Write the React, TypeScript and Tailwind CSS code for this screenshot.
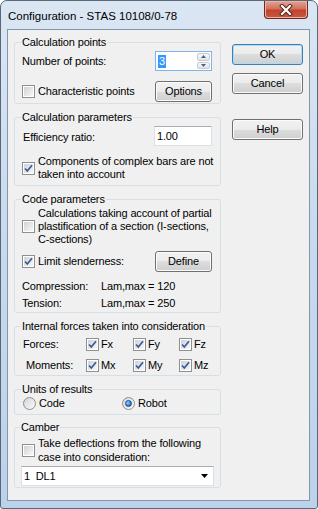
import type { ReactNode } from "react";

function Check({ checked = false }: { checked?: boolean }) {
  return (
    <span className="flex h-[13px] w-[13px] shrink-0 items-center justify-center border border-[#8e8f8f] bg-white p-[1px]">
      <span className="relative flex h-full w-full items-center justify-center bg-gradient-to-br from-[#cfd2d6] to-[#f7f7f7]">
        {checked && (
          <svg width="9" height="9" viewBox="0 0 9 9" className="absolute">
            <path d="M1 4.5 L3.3 7 L8 1.2" fill="none" stroke="#3b5a9a" strokeWidth="1.7" />
          </svg>
        )}
      </span>
    </span>
  );
}

function Radio({ checked = false }: { checked?: boolean }) {
  return (
    <span className="flex h-[13px] w-[13px] shrink-0 items-center justify-center rounded-full border border-[#8e8f8f] bg-gradient-to-br from-[#d4d6da] to-[#fafafa]">
      {checked && (
        <span className="h-[7px] w-[7px] rounded-full border border-[#1c4a82] bg-[radial-gradient(circle_at_35%_35%,#9fd6ff,#2a7ed2_60%,#155aa3)]" />
      )}
    </span>
  );
}

function Btn({ children, wide, def }: { children: ReactNode; wide?: boolean; def?: boolean }) {
  return (
    <button
      className={
        "flex h-[21px] items-center justify-center rounded-[3px] border text-[11px] leading-[13px] text-black bg-[linear-gradient(#f2f2f2,#ebebeb_50%,#dddddd_50%,#cfcfcf)] " +
        (wide ? "w-[71px] " : "w-[57px] ") +
        (def ? "border-[#3c7fb1] shadow-[inset_0_0_0_1px_#aedcf7]" : "border-[#707070] shadow-[inset_0_0_0_1px_#fbfbfb]")
      }
    >
      {children}
    </button>
  );
}

function Group({ title, className, children }: { title: string; className: string; children: ReactNode }) {
  return (
    <fieldset className={"min-w-0 rounded-[3px] border border-[#d5dfe5] pl-[7px] pr-[8px] " + className}>
      <legend className="-ml-[1px] whitespace-nowrap px-[1px] leading-[13px]">{title}</legend>
      {children}
    </fieldset>
  );
}

export default function App() {
  return (
    <div className="flex h-[509px] w-[318px] flex-col rounded-t-[7px] rounded-b-[3px] border border-[#58677a] bg-gradient-to-b from-[#dbe6f3] via-[#c7d9ee] to-[#bcd2ea] font-['Liberation_Sans',Arial,sans-serif] text-[11px] leading-[13px] tracking-[-0.15px] text-black">
      {/* title bar */}
      <div className="flex h-[28px] shrink-0 items-start justify-between">
        <span className="ml-[7px] mt-[8px] text-[11.5px] leading-[14px] tracking-normal">Configuration - STAS 10108/0-78</span>
        <div className="mr-[9px] flex h-[18px] w-[44px] items-center justify-center rounded-b-[4px] border border-t-0 border-[#6e2a22] bg-[linear-gradient(#e8a493,#d2705c_45%,#c1432e_55%,#c85a41)] shadow-[inset_0_0_0_1px_#eab3a6]">
          <svg width="14" height="12" viewBox="0 0 14 12">
            <path d="M3 2 L11 10 M11 2 L3 10" stroke="#4a2019" strokeWidth="4" strokeLinecap="square" />
            <path d="M3 2 L11 10 M11 2 L3 10" stroke="#ffffff" strokeWidth="2.2" strokeLinecap="square" />
          </svg>
        </div>
      </div>

      {/* client area */}
      <div className="mb-[7px] ml-[6px] mr-[7px] flex flex-1 border border-[#8496ab] bg-[#f0f0f0] whitespace-nowrap">
        <div className="ml-[6px] flex w-[207px] shrink-0 flex-col pt-[6px]">
          <Group title="Calculation points" className="pb-[2px]">
            <div className="mt-[2px] flex h-[20px] items-center justify-between">
              <span>Number of points:</span>
              <div className="flex h-[20px] w-[57px] border border-[#7eb4ea] bg-white">
                <div className="flex flex-1 items-center pl-[2px]">
                  <span className="bg-[#3399ff] px-[1px] text-white">3</span>
                </div>
                <div className="flex w-[15px] flex-col gap-[1px] p-[1px]">
                  <div className="flex flex-1 items-center justify-center rounded-[2px] border border-[#c6cbd3] bg-gradient-to-b from-[#f6f6f6] to-[#e3e5e8]">
                    <svg width="5" height="3" viewBox="0 0 5 3"><path d="M0 3 L2.5 0 L5 3 Z" fill="#4d6185" /></svg>
                  </div>
                  <div className="flex flex-1 items-center justify-center rounded-[2px] border border-[#c6cbd3] bg-gradient-to-b from-[#f6f6f6] to-[#e3e5e8]">
                    <svg width="5" height="3" viewBox="0 0 5 3"><path d="M0 0 L2.5 3 L5 0 Z" fill="#4d6185" /></svg>
                  </div>
                </div>
              </div>
            </div>
            <div className="mt-[10px] flex h-[20px] items-center justify-between">
              <label className="flex items-center gap-[3px]">
                <Check />
                <span>Characteristic points</span>
              </label>
              <Btn>Options</Btn>
            </div>
          </Group>

          <Group title="Calculation parameters" className="mt-[7px] pb-[4px]">
            <div className="mt-[2px] flex h-[20px] items-center justify-between">
              <span className="pl-[1px] pt-[3px]">Efficiency ratio:</span>
              <div className="flex h-[20px] w-[58px] items-center border border-[#dbdfe6] border-t-[#abadb3] bg-white pl-[2px]">1.00</div>
            </div>
            <label className="mt-[9px] flex items-center gap-[3px]">
              <Check checked />
              <span>
                Components of complex bars are not
                <br />
                taken into account
              </span>
            </label>
          </Group>

          <Group title="Code parameters" className="mt-[7px] pb-[2px]">
            <label className="mt-[1px] flex items-center gap-[3px]">
              <Check />
              <span>
                Calculations taking account of partial
                <br />
                plastification of a section (I-sections,
                <br />
                C-sections)
              </span>
            </label>
            <div className="mt-[5px] flex h-[20px] items-center justify-between">
              <label className="flex items-center gap-[3px]">
                <Check checked />
                <span>Limit slenderness:</span>
              </label>
              <Btn>Define</Btn>
            </div>
            <div className="mt-[9px] flex">
              <span className="w-[79px]">Compression:</span>
              <span>Lam,max = 120</span>
            </div>
            <div className="mt-[4px] flex">
              <span className="w-[79px]">Tension:</span>
              <span>Lam,max = 250</span>
            </div>
          </Group>

          <Group title="Internal forces taken into consideration" className="mt-[7px] pb-[1px]">
            {[
              { label: "Forces:", pad: "pl-[1px]", items: ["Fx", "Fy", "Fz"] },
              { label: "Moments:", pad: "pl-[4px]", items: ["Mx", "My", "Mz"] },
            ].map((row, i) => (
              <div key={row.label} className={"flex h-[17px] items-center " + (i === 0 ? "mt-[3px]" : "mt-[4px]")}>
                <span className={"w-[64px] " + row.pad}>{row.label}</span>
                {row.items.map((it, j) => (
                  <label key={it} className={"flex items-center gap-[2px] " + (j === 0 ? "w-[47px]" : j === 1 ? "w-[46px]" : "")}>
                    <Check checked />
                    <span>{it}</span>
                  </label>
                ))}
              </div>
            ))}
          </Group>

          <Group title="Units of results" className="mt-[7px] pb-[4px]">
            <div className="flex h-[14px] items-center">
              <label className="flex w-[100px] items-center gap-[3px] pl-[1px]">
                <Radio />
                <span>Code</span>
              </label>
              <label className="flex items-center gap-[3px]">
                <Radio checked />
                <span>Robot</span>
              </label>
            </div>
          </Group>

          <Group title="Camber" className="mt-[6px] pb-[1px] !pl-[6px] !pr-[6px]">
            <label className="mt-[2px] flex items-center gap-[3px] pl-[1px] leading-[14px]">
              <Check />
              <span>
                Take deflections from the following
                <br />
                case into consideration:
              </span>
            </label>
            <div className="mt-[2px] flex h-[20px] w-[193px] items-center justify-between border border-[#dbdfe6] border-t-[#abadb3] bg-white pl-[2px] pr-[5px]">
              <span className="whitespace-pre">1  DL1</span>
              <svg width="7" height="4" viewBox="0 0 7 4"><path d="M0 0 L7 0 L3.5 4 Z" fill="#000" /></svg>
            </div>
          </Group>
        </div>

        <div className="ml-[11px] flex flex-col pt-[14px]">
          <Btn wide def>OK</Btn>
          <div className="mt-[8px]">
            <Btn wide>Cancel</Btn>
          </div>
          <div className="mt-[25px]">
            <Btn wide>Help</Btn>
          </div>
        </div>
      </div>
    </div>
  );
}
